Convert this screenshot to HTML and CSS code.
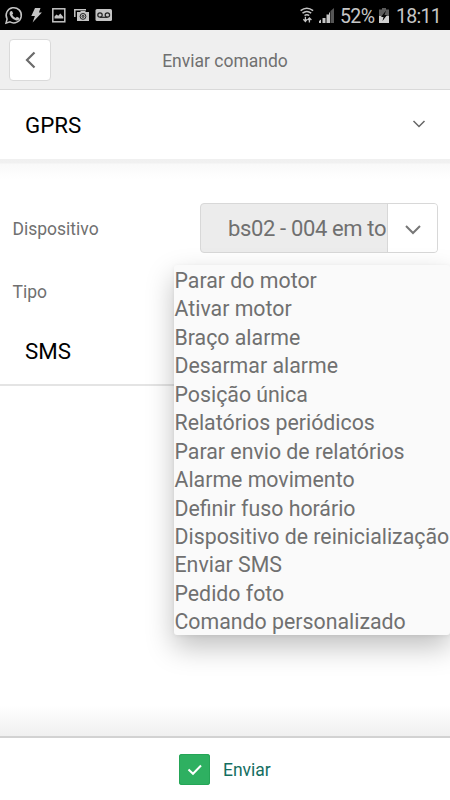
FILE: index.html
```html
<!DOCTYPE html>
<html lang="pt">
<head>
<meta charset="utf-8">
<title>Enviar comando</title>
<link rel="stylesheet" href="styles.css">
</head>
<body>
<div class="screen">
  <div class="statusbar">
    <svg class="notices" width="115" height="30" viewBox="0 0 115 30" fill="none" stroke="#c4c4c4" stroke-width="1.5">
      <path d="M6 23.2l1.1-4.2a7.6 7.6 0 1 1 2.9 2.9z"/>
      <path d="M10.5 11.2l1.5-.3 1.2 2.6-1 1.2q1.2 2.3 3.500 3.300l1.200-1.300 2.400 1.200-.2 1.500q-1.200 1.500-3.500.8-4.500-1.600-6-6-.2-2 .9-3z" fill="#c4c4c4" stroke="none"/>
      <path d="M35 8h5.500l-1.600 4.600h3L32.600 22.500l2.300-6.600h-3.600z" fill="#c4c4c4" stroke="none"/>
      <rect x="52.800" y="8.800" width="12" height="13"/>
      <path d="M54.500 18.500v-2l2-2 1.800 1.300 2-2.300 3 3.500v1.500z" fill="#c4c4c4" stroke="none"/>
      <path d="M74.800 17V9.800H86"/>
      <path d="M77 12h3l1-1h4l1 1h3v9H77z" fill="#c4c4c4" stroke="none"/>
      <circle cx="83" cy="16.400" r="2.900" stroke="#222" stroke-width="1"/>
      <circle cx="83" cy="16.400" r="1" stroke="#222" stroke-width="1"/>
      <rect x="95.500" y="9" width="16.500" height="12" rx="1.500" fill="#c4c4c4" stroke="none"/>
      <g stroke="#222" stroke-width="1.200"><circle cx="100" cy="15" r="2.200"/><circle cx="107.400" cy="15" r="2.200"/><path d="M100 17.300h7.400"/></g>
    </svg>
    <svg class="signals" width="36" height="30" viewBox="300 0 36 30" fill="none" stroke="#c4c4c4" stroke-width="1.5">
      <path d="M300.600 10.700q6.200-5 12.500 0M302.500 13.200q4.400-3.400 8.700 0M304.500 15.500q2.400-1.700 4.700 0"/>
      <path d="M305.400 16.800v4M303.400 19.200l2 2.200 1.600-2M309.400 22.500v-4M307.600 20l1.800-2 2 2" stroke-width="1.3"/>
      <path d="M319 23v-2l2-1.500v3.500zM322.500 23v-5h3v5zM326.500 23v-8.500h3v8.500z" fill="#c4c4c4" stroke="none"/>
      <path d="M330.500 23V11l3.500-3v15z" fill="#555" stroke="none"/>
      <path d="M330 23V12l-1 1v10z" fill="#c4c4c4" stroke="none"/>
    </svg>
    <span class="percent">52%</span>
    <svg class="battery" width="12" height="30" viewBox="378 0 12 30">
      <path d="M379 9.500h3V8h4v1.500h3V23h-10z" fill="#5c5c5c"/>
      <path d="M379 16h10v7h-10z" fill="#d0d0d0"/>
      <path d="M386 10.500l-5 6.500h2.500l-1 4 4.500-6h-2.500z" fill="#050505"/>
    </svg>
    <span class="clock">18:11</span>
  </div>
  <header class="header">
    <button class="back" aria-label="Voltar"><svg width="40" height="40" viewBox="0 0 40 40"><path d="M24.500 12.500l-7.500 7.500 7.500 7.500" fill="none" stroke="#6b6b6b" stroke-width="2.200"/></svg></button>
    <h1 class="title">Enviar comando</h1>
  </header>
  <section class="group">
    <h2 class="name">GPRS</h2>
    <svg class="arrow" width="14" height="10" viewBox="0 0 14 10"><path d="M1.500 1l5.500 5.500L12.500 1" fill="none" stroke="#666" stroke-width="1.500"/></svg>
  </section>
  <main class="form">
    <div class="row">
      <label class="label">Dispositivo</label>
      <div class="select">
        <span class="value">bs02 - 004 em to</span>
        <span class="toggle"><svg width="16" height="12" viewBox="0 0 16 12"><path d="M1 2l7 7 7-7" fill="none" stroke="#777" stroke-width="2"/></svg></span>
      </div>
    </div>
    <div class="row type">
      <label class="label">Tipo</label>
      <ul class="menu">
        <li>Parar do motor</li>
        <li>Ativar motor</li>
        <li>Braço alarme</li>
        <li>Desarmar alarme</li>
        <li>Posição única</li>
        <li>Relatórios periódicos</li>
        <li>Parar envio de relatórios</li>
        <li>Alarme movimento</li>
        <li>Definir fuso horário</li>
        <li>Dispositivo de reinicialização</li>
        <li>Enviar SMS</li>
        <li>Pedido foto</li>
        <li>Comando personalizado</li>
      </ul>
    </div>
    <h2 class="name sms">SMS</h2>
  </main>
  <footer class="footer">
    <span class="check"><svg width="31" height="31" viewBox="0 0 31 31"><path d="M9.500 15.500l4.500 4.300 8-8.300" fill="none" stroke="#fff" stroke-width="2"/></svg></span>
    <span class="send">Enviar</span>
  </footer>
</div>
</body>
</html>
```

FILE: styles.css
```css
* { box-sizing: border-box; }
body { margin: 0; font-family: Roboto, "Liberation Sans", sans-serif; color: #707070; }
h1, h2, ul { margin: 0; padding: 0; font-weight: 400; }
svg { display: block; flex: none; }
.screen { width: 450px; height: 800px; overflow: hidden; display: flex; flex-direction: column; background: #fff; }
.statusbar { height: 30px; flex: none; background: #000; color: #c6c6c6; display: flex; align-items: center; font-size: 19.5px; line-height: 30px; white-space: nowrap; }
.signals { margin-left: 185px; }
.percent { width: 37px; margin-left: 4px; padding-top: 3px; font-size: 19.5px; letter-spacing: -0.6px; }
.battery { margin-left: 1px; }
.clock { margin-left: 6px; padding-top: 3px; letter-spacing: -0.7px; }
.header { height: 60px; flex: none; background: #efefef; border-bottom: 1px solid #d9d9d9; display: grid; grid-template-columns: 42px 1fr 42px; align-items: center; padding: 0 9px; }
.back { width: 42px; height: 42px; padding: 0; background: #fff; border: 1px solid #dadada; border-radius: 4px; }
.title { text-align: center; font-size: 17.5px; padding-top: 2px; }
.group { height: 69px; flex: none; display: flex; align-items: center; justify-content: space-between; padding: 1px 24px 0 25px; }
.name { color: #000; font-size: 22.3px; line-height: 28px; }
.form { flex: 1; background: linear-gradient(#f0f0f0 0, #f1f1f1 4px, #f9f9f9 5px, #fff 20px, #fff calc(100% - 30px), #f0f0f0 100%); padding-top: 44px; }
.row { height: 50px; display: flex; align-items: center; padding: 0 12px 0 12.5px; }
.label { width: 187.5px; flex: none; font-size: 17.5px; padding-top: 2px; }
.select { width: 238px; height: 50px; display: flex; background: #ececec; border: 1px solid #d8d8d8; border-radius: 4px; overflow: hidden; }
.value { flex: 1; padding-left: 27px; font-size: 22px; letter-spacing: -0.36px; line-height: 50px; white-space: nowrap; }
.toggle { width: 50px; flex: none; background: #fff; border-left: 1px solid #d8d8d8; display: flex; align-items: center; justify-content: center; padding-top: 3px; }
.type { position: relative; margin-top: 12px; }
.type .label { padding-top: 3px; }
.menu { position: absolute; z-index: 2; left: 174px; top: 0; width: 276px; height: 370px; list-style: none; background: #fafafa; border-radius: 3px; box-shadow: 0 12px 28px rgba(0,0,0,.25), 0 1px 4px rgba(0,0,0,.06); display: grid; grid-template-rows: repeat(13, 28.45px); font-size: 21.32px; line-height: 28.45px; white-space: nowrap; padding: 2px 0 0 0.5px; }
.sms { height: 71px; display: flex; align-items: center; padding: 3px 0 0 25px; border-bottom: 2px solid #e4e4e4; }
.footer { height: 64px; flex: none; border-top: 2px solid #d2d2d2; display: flex; align-items: center; padding-left: 179px; }
.check { width: 31px; height: 31px; background: #2eb061; border-radius: 3px; box-shadow: inset 0 0 0 1px #25a557; }
.send { margin-left: 13px; padding-top: 1px; color: #146e61; font-size: 17.5px; }
```
